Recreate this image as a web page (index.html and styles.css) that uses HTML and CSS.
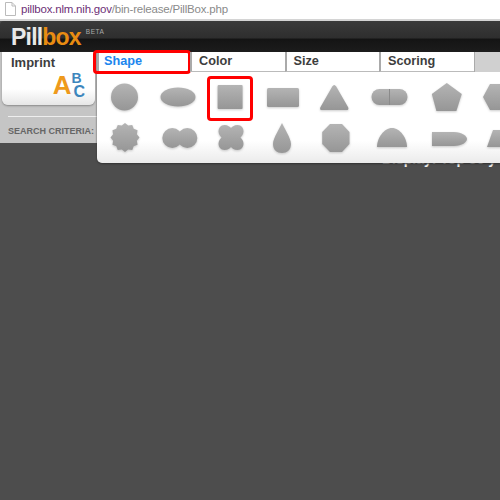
FILE: index.html
```html
<!doctype html>
<html>
<head>
    <meta charset="utf-8">
    <title>Pillbox</title>
    <link rel="stylesheet" href="styles.css">
</head>

<body>
    <svg class="defs" width="0" height="0">
        <defs>
            <linearGradient id="pill" x1="0" y1="0" x2="0" y2="1">
                <stop offset="0" stop-color="#b4b4b4"/>
                <stop offset="1" stop-color="#969696"/>
            </linearGradient>
        </defs>
    </svg>

    <div class="urlbar">
        <svg class="pageicon" width="11" height="14" viewBox="0 0 11 14">
            <path d="M.5 .5H7L10.500 4V13.500H.5Z M7 .5V4H10.500" fill="#fff" stroke="#bbb"/>
        </svg>
        <span class="url"><span class="domain">pillbox.nlm.nih.gov</span>/bin-release/PillBox.php</span>
    </div>

    <div class="page">
        <div class="header">
            <span class="logo">Pill<span class="logo-box">box</span></span>
            <span class="beta">BETA</span>
        </div>

        <div class="search">
            <div class="imprint">
                <div class="tabtitle">Imprint</div>
                <div class="abc">
                    <span class="abc-a">A</span>
                    <span class="abc-bc"><span class="abc-b">B</span><span class="abc-c">C</span></span>
                </div>
            </div>
            <div class="criteria">SEARCH CRITERIA:</div>

            <div class="popup">
                <div class="tabs">
                    <div class="tab tab-on">Shape<span class="redbox redbox-tab"></span></div>
                    <div class="tab">Color</div>
                    <div class="tab">Size</div>
                    <div class="tab">Scoring</div>
                    <div class="tab-rest"></div>
                </div>
                <div class="shapes">
                    <div class="shape"><svg viewBox="0 0 44 40"><circle cx="22.500" cy="21" r="13.500" /></svg></div>
                    <div class="shape"><svg viewBox="0 0 44 40"><ellipse cx="22" cy="21" rx="17.500" ry="9.500" /></svg></div>
                    <div class="shape"><svg viewBox="0 0 44 40"><rect x="8.600" y="9" width="25" height="24" rx="1" /></svg><span class="redbox redbox-shape"></span></div>
                    <div class="shape"><svg viewBox="0 0 44 40"><rect x="4" y="12" width="32" height="19" rx="1.500" /></svg></div>
                    <div class="shape"><svg viewBox="0 0 44 40"><path d="M17.200 9C18 9 19 10 19.500 11L31 31C32 33 31 34 30 34H4.500C3.500 34 2.500 33 3.500 31L15 11C15.500 10 16.500 9 17.200 9Z" /></svg></div>
                    <div class="shape"><svg viewBox="0 0 44 40"><rect x="1.500" y="13" width="36" height="16" rx="8" /><path class="seam" d="M19.500 13V29" /></svg></div>
                    <div class="shape"><svg viewBox="0 0 44 40"><path d="M22.800 7L37.800 18L32.400 35H12.400L7.800 18Z" /></svg></div>
                    <div class="shape"><svg viewBox="0 0 44 40"><path d="M12 8H34L44 21L34 34H12L5 21Z" /></svg></div>

                    <div class="shape"><svg viewBox="0 0 44 40"><path d="M23 5L26.200 7.600L30.250 6.940L31.700 10.800L35.560 12.250L34.880 16.300L37.500 19.500L34.880 22.700L35.560 26.750L31.700 28.200L30.250 32.060L26.200 31.400L23 34L19.800 31.400L15.750 32.060L14.300 28.200L10.440 26.750L11.120 22.700L8.500 19.500L11.120 16.300L10.440 12.250L14.300 10.800L15.750 6.940L19.800 7.600Z" /></svg></div>
                    <div class="shape"><svg viewBox="0 0 44 40"><circle cx="16.300" cy="20" r="10" /><circle cx="31.300" cy="20" r="10" /></svg></div>
                    <div class="shape"><svg viewBox="0 0 44 40"><path d="M15.500 7C19 7 21 9 22 10C23 9 25 7 28.500 7C32.500 7 34.500 10 34.500 13.500C34.500 16.500 32.500 18.500 31.500 19.500C32.500 20.500 34.500 22.500 34.500 25.500C34.500 29 32.500 32 28.500 32C25 32 23 30 22 29C21 30 19 32 15.500 32C11.500 32 9.500 29 9.500 25.500C9.500 22.500 11.500 20.500 12.500 19.500C11.500 18.500 9.500 16.500 9.500 13.500C9.500 10 11.500 7 15.500 7Z" /></svg></div>
                    <div class="shape"><svg viewBox="0 0 44 40"><path d="M19 5C21 10 28 20 28 26C28 32 24 35 19 35C14 35 10 32 10 26C10 20 17 10 19 5Z" /></svg></div>
                    <div class="shape"><svg viewBox="0 0 44 40"><path d="M13 6H25L32.500 14V26L25 34H13L5.200 26V14Z" /></svg></div>
                    <div class="shape"><svg viewBox="0 0 44 40"><path d="M7 29C7 20 14 10 22 10C30 10 37 20 37 29Z" /></svg></div>
                    <div class="shape"><svg viewBox="0 0 44 40"><path d="M8 14H30C38 14 43 18 43 21C43 24 38 28 30 28H8Z" /></svg></div>
                    <div class="shape"><svg viewBox="0 0 44 40"><path d="M15 12H40L46 29H9Z" /></svg></div>
                </div>
            </div>
        </div>

        <div class="results">
            <div class="display">Display: Top 50 y</div>
        </div>
    </div>
</body>
</html>
```

FILE: styles.css
```css
* {
  box-sizing: border-box;
}

html, body {
  margin: 0;
  height: 500px;
  overflow: hidden;
}

body {
  font-family: "Liberation Sans", Arial, sans-serif;
  background-color: #4d4d4d;
}

.defs {
  position: absolute;
}

.urlbar {
  height: 19px;
  padding: 0 0 2px 5px;
  background-color: #fff;
  display: flex;
  align-items: center;
  gap: 5px;
  font-size: 11.500px;
  letter-spacing: -.2px;
}

.pageicon {
  flex: none;
}

.url {
  color: #8a8a8a;
  white-space: nowrap;
}

.domain {
  color: #6d2f77;
}

.page {
  border-top: 2px solid #d4d4d4;
}

.header {
  height: 31px;
  background: linear-gradient(#3a3a3a 0, #2e2e2e 55%, #141414 58%, #1c1c1c 100%);
  border-radius: 4px 0 0 0;
  display: flex;
  align-items: flex-start;
  padding: 1px 0 0 11px;
}

.logo {
  font-size: 23px;
  font-weight: bold;
  letter-spacing: -.8px;
  line-height: 31px;
  color: #e8e8e8;
}

.logo-box {
  color: #e98c12;
}

.beta {
  margin: 6px 0 0 5px;
  font-size: 6.500px;
  letter-spacing: .5px;
  color: #aaa;
}

.search {
  height: 91px;
  background-color: #c5c5c5;
  position: relative;
}

.imprint {
  width: 93px;
  height: 53px;
  margin-left: 2px;
  padding: 3px 0 0 9px;
  background: linear-gradient(#fff 70%, #e6e6e6 100%);
  border-radius: 0 0 6px 6px;
  box-shadow: 0 1px 2px #888;
}

.tabtitle {
  font-size: 13px;
  font-weight: bold;
  color: #3d3d3d;
}

.abc {
  display: flex;
  justify-content: flex-end;
  align-items: flex-end;
  padding-right: 10px;
  margin-top: 1px;
  font-weight: bold;
}

.abc-a {
  font-size: 26px;
  line-height: 28px;
  margin-right: -1px;
  color: #ee9a1c;
}

.abc-bc {
  display: flex;
  flex-direction: column;
  color: #3d86bd;
}

.abc-b {
  font-size: 14px;
  line-height: 12px;
  margin-left: 1px;
}

.abc-c {
  font-size: 16px;
  line-height: 15px;
  margin-left: 3px;
}

.criteria {
  margin: 11px 0 0 8px;
  padding-top: 9px;
  border-top: 1px solid #eee;
  font-size: 9px;
  font-weight: bold;
  color: #666;
  white-space: nowrap;
}

.popup {
  position: absolute;
  top: 0;
  left: 97px;
  width: 403px;
  height: 111px;
  background: linear-gradient(#fff 80%, #ebebeb 100%);
  border-radius: 0 0 0 5px;
  box-shadow: 0 1px 2px #333;
  z-index: 2;
}

.tabs {
  display: flex;
  height: 20px;
}

.tab {
  width: 94.500px;
  padding: 2px 0 0 7px;
  font-size: 12.700px;
  font-weight: bold;
  color: #3d3d3d;
  background-color: #fff;
  border-left: 2px solid #aaa;
  border-bottom: 1px solid #bbb;
  position: relative;
}

.tab-on {
  color: #1c86ee;
  width: 93px;
  padding-left: 5px;
  border-bottom: 0;
}

.tab-rest {
  flex: 1;
  background-color: #d0d0d0;
  border-left: 1px solid #aaa;
}

.shapes {
  display: grid;
  grid-template-columns: repeat(8, 53.700px);
  grid-auto-rows: 42px;
  padding-top: 3px;
  overflow: hidden;
}

.shape {
  position: relative;
  display: flex;
  align-items: center;
  justify-content: center;
}

.shape svg {
  width: 44px;
  height: 40px;
  flex: none;
  overflow: visible;
  fill: url(#pill);
  filter: drop-shadow(0 1px 1px rgba(0, 0, 0, .2));
}

.seam {
  fill: none;
  stroke: #8a8a8a;
}

/* the red marks lie over the page */
.redbox {
  position: absolute;
  border: 3px solid #f00;
  border-radius: 4px;
}

.redbox-tab {
  top: -2px;
  left: -6px;
  width: 98px;
  height: 24px;
}

.redbox-shape {
  top: 1px;
  left: 3px;
  width: 46px;
  height: 45px;
}

.results {
  height: 357px;
  position: relative;
}

.display {
  padding: 8px 0 0 382px;
  font-size: 14px;
  font-weight: bold;
  color: #eee;
  white-space: nowrap;
}
```
